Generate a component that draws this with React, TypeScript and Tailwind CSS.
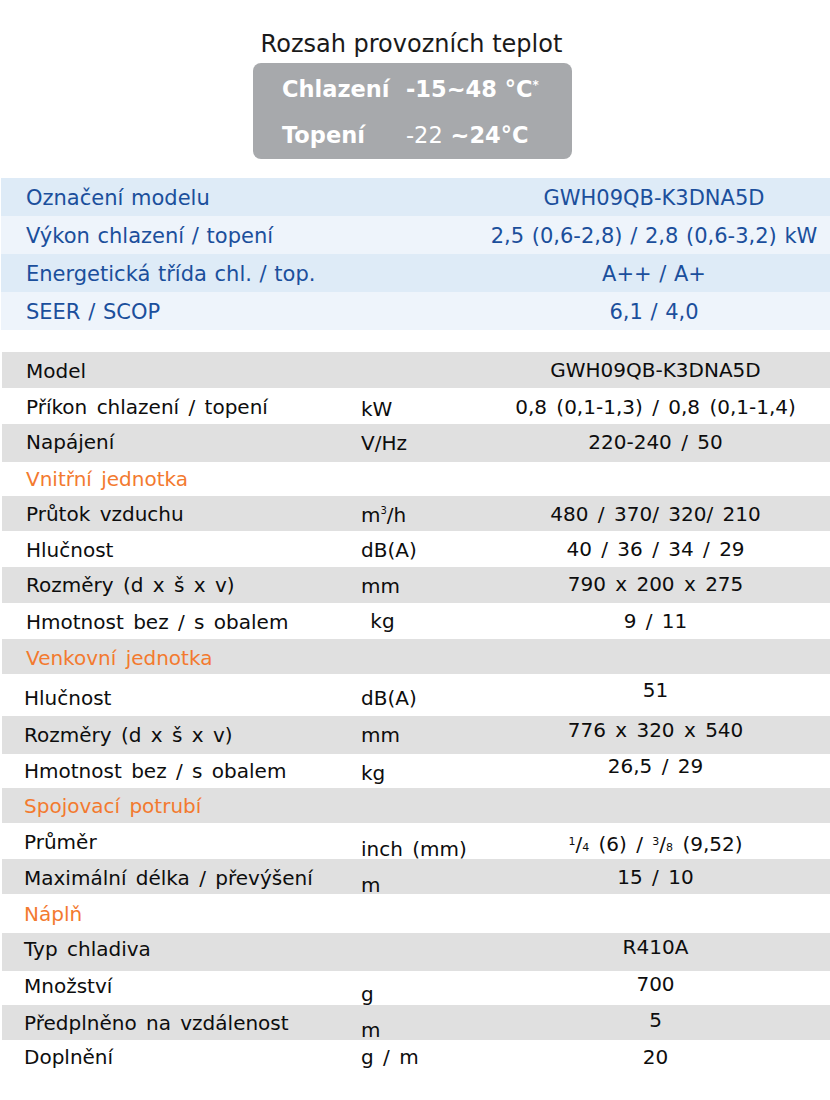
import React from "react";

type Row = {
  h: string;
  bg: string;
  label: React.ReactNode;
  orange?: boolean;
  unit?: React.ReactNode;
  value?: React.ReactNode;
  ly?: string;
  uy?: string;
  vy?: string;
  lx?: string;
};

const G = "bg-[#e0e0e0]";
const W = "bg-white";

const rows: Row[] = [
  { h: "h-[36px]", bg: G, label: "Model", value: "GWH09QB-K3DNA5D", ly: "translate-y-[1px]" },
  { h: "h-[36px]", bg: W, label: "Příkon chlazení / topení", unit: "kW", value: "0,8 (0,1-1,3) / 0,8 (0,1-1,4)", ly: "translate-y-[1px]", uy: "translate-y-[3px]", vy: "translate-y-[1px]" },
  { h: "h-[38px]", bg: G, label: "Napájení", unit: "V/Hz", value: "220-240 / 50", ly: "-translate-y-[1px]", vy: "-translate-y-[1px]" },
  { h: "h-[34px]", bg: W, label: "Vnitřní jednotka", orange: true },
  {
    h: "h-[35px]",
    bg: G,
    label: "Průtok vzduchu",
    unit: (
      <span>
        m<sup className="text-[10px] relative -top-[8px]">3</sup>/h
      </span>
    ),
    value: "480 / 370/ 320/ 210",
    uy: "translate-y-[1px]",
  },
  { h: "h-[36px]", bg: W, label: "Hlučnost", unit: "dB(A)", value: "40 / 36 / 34 / 29", ly: "translate-y-[1px]", uy: "translate-y-[1px]" },
  { h: "h-[36px]", bg: G, label: "Rozměry (d x š x v)", unit: "mm", value: "790 x 200 x 275", uy: "translate-y-[1px]", vy: "-translate-y-[1px]" },
  { h: "h-[36px]", bg: W, label: "Hmotnost bez / s obalem", unit: "\u00a0kg", value: "9 / 11", ly: "translate-y-[1px]" },
  { h: "h-[35px]", bg: G, label: "Venkovní jednotka", orange: true, ly: "translate-y-[1px]" },
  { h: "h-[42px]", bg: W, label: "Hlučnost", unit: "dB(A)", value: "51", ly: "translate-y-[3px]", uy: "translate-y-[3px]", vy: "-translate-y-[5px]", lx: "pl-[22px]" },
  { h: "h-[38px]", bg: G, label: "Rozměry (d x š x v)", unit: "mm", value: "776 x 320 x 540", vy: "-translate-y-[5px]", lx: "pl-[22px]" },
  { h: "h-[34px]", bg: W, label: "Hmotnost bez / s obalem", unit: "kg", value: "26,5 / 29", uy: "translate-y-[2px]", vy: "-translate-y-[5px]", lx: "pl-[22px]" },
  { h: "h-[35px]", bg: G, label: "Spojovací potrubí", orange: true, lx: "pl-[22px]" },
  {
    h: "h-[36px]",
    bg: W,
    label: "Průměr",
    unit: "inch (mm)",
    value: (
      <span>
        <span className="text-[11px] relative -top-[6px]">1</span>
        <span>/</span>
        <span className="text-[11px]">4</span> (6) /{" "}
        <span className="text-[11px] relative -top-[6px]">3</span>
        <span>/</span>
        <span className="text-[11px]">8</span> (9,52)
      </span>
    ),
    ly: "translate-y-[1px]",
    uy: "translate-y-[8px]",
    vy: "translate-y-[3px]",
    lx: "pl-[22px]",
  },
  { h: "h-[35px]", bg: G, label: "Maximální délka / převýšení", unit: "m", value: "15 / 10", ly: "translate-y-[1px]", uy: "translate-y-[8px]", lx: "pl-[22px]" },
  { h: "h-[39px]", bg: W, label: "Náplň", orange: true, lx: "pl-[22px]" },
  { h: "h-[38px]", bg: G, label: "Typ chladiva", value: "R410A", ly: "-translate-y-[3px]", vy: "-translate-y-[5px]", lx: "pl-[22px]" },
  { h: "h-[34px]", bg: W, label: "Množství", unit: "g", value: "700", ly: "-translate-y-[2px]", uy: "translate-y-[6px]", vy: "-translate-y-[4px]", lx: "pl-[22px]" },
  { h: "h-[35px]", bg: G, label: "Předplněno na vzdálenost", unit: "m", value: "5", uy: "translate-y-[7px]", vy: "-translate-y-[3px]", lx: "pl-[22px]" },
  { h: "h-[36px]", bg: W, label: "Doplnění", unit: "g / m", value: "20", ly: "-translate-y-[1px]", uy: "-translate-y-[1px]", vy: "-translate-y-[1px]", lx: "pl-[22px]" },
];

const blueRows = [
  { label: "Označení modelu", value: "GWH09QB-K3DNA5D", bg: "bg-[#deebf7]" },
  { label: "Výkon chlazení / topení", value: "2,5 (0,6-2,8) / 2,8 (0,6-3,2) kW", bg: "bg-[#eef4fb]" },
  { label: "Energetická třída chl. / top.", value: "A++ / A+", bg: "bg-[#deebf7]" },
  { label: "SEER / SCOP", value: "6,1 / 4,0", bg: "bg-[#eef4fb]" },
];

export default function App() {
  return (
    <div
      className="w-[830px] h-[1100px] bg-white text-[#111] overflow-hidden"
      style={{ fontFamily: '"DejaVu Sans", "Noto Sans", sans-serif' }}
    >
      {/* Header */}
      <div className="flex flex-col items-center pt-[30px]">
        <div className="text-[24px] leading-[28px] text-[#1a1a1a] ml-[-7px]">Rozsah provozních teplot</div>
        <div className="mt-[5px] w-[319px] h-[96px] rounded-[8px] bg-[#a7a9ac] text-white font-bold text-[22.5px] ml-[-5px] flex flex-col pl-[29px] pt-[12px] gap-[18px]">
          <div className="flex leading-[28px]">
            <span className="w-[124px]">Chlazení</span>
            <span>
              -15~48 °C<sup className="text-[12px] relative -top-[8px]">*</sup>
            </span>
          </div>
          <div className="flex leading-[28px]">
            <span className="w-[124px]">Topení</span>
            <span>
              <span className="font-normal">-22</span> ~24°C
            </span>
          </div>
        </div>
      </div>

      {/* Blue table */}
      <div className="mt-[19px] ml-[1px] flex flex-col text-[#1b4f9c] text-[21px] [word-spacing:1px]">
        {blueRows.map((r, i) => (
          <div key={i} className={`flex h-[38px] items-center ${r.bg}`}>
            <div className="w-[477px] pl-[25px] whitespace-nowrap translate-y-[2px]">{r.label}</div>
            <div className="flex-1 text-center whitespace-nowrap translate-y-[2px]">{r.value}</div>
          </div>
        ))}
      </div>

      {/* Gray table */}
      <div className="mt-[22px] ml-[2px] flex flex-col text-[20px] [word-spacing:3px] text-[#0d0d0d]">
        {rows.map((r, i) => (
          <div key={i} className={`flex items-center ${r.h} ${r.bg}`}>
            <div className={`w-[359px] ${r.lx ?? "pl-[24px]"} whitespace-nowrap`}>
              <span className={`inline-block ${r.ly ?? ""} ${r.orange ? "text-[#f37a2f]" : ""}`}>{r.label}</span>
            </div>
            <div className="w-[120px] whitespace-nowrap">
              <span className={`inline-block ${r.uy ?? ""}`}>{r.unit}</span>
            </div>
            <div className="flex-1 text-center whitespace-nowrap">
              <span className={`inline-block ${r.vy ?? ""}`}>{r.value}</span>
            </div>
          </div>
        ))}
      </div>
    </div>
  );
}
